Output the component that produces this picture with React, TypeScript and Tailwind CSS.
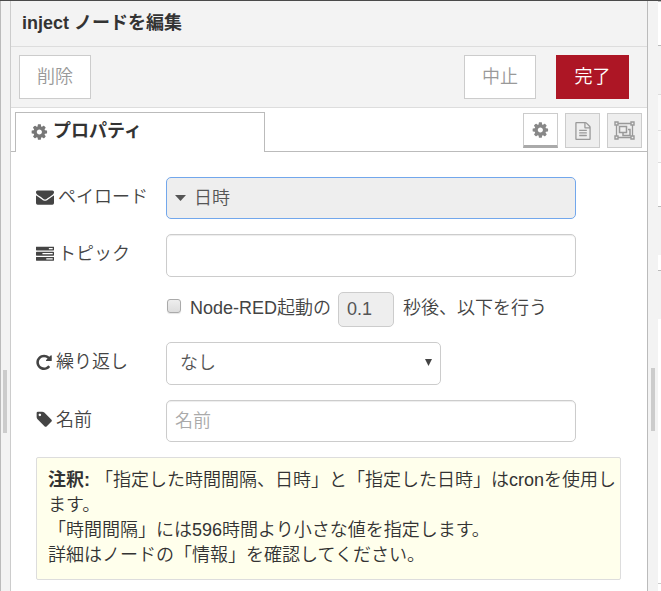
import type { ReactNode } from "react";

const paths = {
  cog: "M1152 896q0-106-75-181t-181-75-181 75-75 181 75 181 181 75 181-75 75-181zm512-109v222q0 12-8 23t-20 13l-185 28q-19 54-39 91 35 50 107 138 10 12 10 25t-9 23q-27 37-99 108t-94 71q-12 0-26-9l-138-108q-44 23-91 38-16 136-29 186-7 28-36 28h-222q-14 0-24.5-8.5t-11.5-21.5l-28-184q-49-16-90-37l-141 107q-10 9-25 9-14 0-25-11-126-114-165-168-7-10-7-23 0-12 8-23 15-21 51-66.5t54-70.5q-27-50-41-99l-183-27q-13-2-21-12.5t-8-23.5v-222q0-12 8-23t19-13l186-28q14-46 39-92-40-57-107-138-10-12-10-24 0-10 9-23 26-36 98.5-107.5t94.5-71.5q13 0 26 10l138 107q44-23 91-38 16-136 29-186 7-28 36-28h222q14 0 24.5 8.5t11.5 21.5l28 184q49 16 90 37l142-107q9-9 24-9 13 0 25 10 129 119 165 170 7 8 7 22 0 12-8 23-15 21-51 66.5t-54 70.5q26 50 41 98l183 28q13 2 21 12.5t8 23.5z",
  envelope: "M1792 710v794q0 66-47 113t-113 47h-1472q-66 0-113-47t-47-113v-794q44 49 101 87 362 246 497 345 57 42 92.5 65.5t94.5 48 110 24.5h2q51 0 110-24.5t94.5-48 92.5-65.5q170-123 498-345 57-39 100-87zm0-294q0 79-49 151t-122 123q-376 261-468 325-10 7-42.5 31t-54 38.5-52 32.5-57.5 27-50 9h-2q-23 0-50-9t-57.5-27-52-32.5-54-38.5-42.5-31q-91-64-262-182.5t-205-142.5q-62-42-117-115.5t-55-136.5q0-78 41.5-130t118.5-52h1472q65 0 112.5 47t47.5 113z",
  tag: "M576 448q0-53-37.5-90.5t-90.5-37.5-90.5 37.5-37.5 90.5 37.5 90.5 90.5 37.5 90.5-37.5 37.5-90.5zm1067 576q0 53-37 90l-491 492q-39 37-91 37-53 0-90-37l-715-716q-38-37-64.5-101t-26.5-117v-416q0-52 38-90t90-38h416q53 0 117 26.5t102 64.5l715 714q37 39 37 91z",
  repeat: "M1664 256v448q0 26-19 45t-45 19h-448q-42 0-59-40-17-39 14-69l138-138q-148-137-349-137-104 0-198.5 40.5t-163.5 109.5-109.5 163.5-40.5 198.5 40.5 198.5 109.5 163.5 163.5 109.5 198.5 40.5q119 0 225-52t179-147q7-10 23-12 15 0 25 9l137 138q9 8 9.5 20.5t-7.5 22.5q-109 132-264 204.5t-327 72.5q-156 0-298-61t-245-164-164-245-61-298 61-298 164-245 245-164 298-61q147 0 284.5 55.5t244.5 156.5l130-129q29-31 70-14 39 17 39 59z",
  tasks: "M1024 1408h640v-128h-640v128zm-384-512h1024v-128h-1024v128zm640-512h384v-128h-384v128zm512 832v256q0 26-19 45t-45 19h-1664q-26 0-45-19t-19-45v-256q0-26 19-45t45-19h1664q26 0 45 19t19 45zm0-512v256q0 26-19 45t-45 19h-1664q-26 0-45-19t-19-45v-256q0-26 19-45t45-19h1664q26 0 45 19t19 45zm0-512v256q0 26-19 45t-45 19h-1664q-26 0-45-19t-19-45v-256q0-26 19-45t45-19h1664q26 0 45 19t19 45z",
  file: "M1596 380q28 28 48 76t20 88v1152q0 40-28 68t-68 28h-1344q-40 0-68-28t-28-68v-1600q0-40 28-68t68-28h896q40 0 88 20t76 48zm-444-244v376h376q-10-29-22-41l-313-313q-12-12-41-22zm384 1528v-1024h-416q-40 0-68-28t-28-68v-416h-768v1536h1280zm-1024-864q0-14 9-23t23-9h704q14 0 23 9t9 23v64q0 14-9 23t-23 9h-704q-14 0-23-9t-9-23v-64zm736 224q14 0 23 9t9 23v64q0 14-9 23t-23 9h-704q-14 0-23-9t-9-23v-64q0-14 9-23t23-9h704zm0 256q14 0 23 9t9 23v64q0 14-9 23t-23 9h-704q-14 0-23-9t-9-23v-64q0-14 9-23t23-9h704z",
};

const boxes: Record<keyof typeof paths, string> = {
  cog: "64 0 1792 1792",
  envelope: "0 0 1792 1792",
  tag: "64 64 1792 1792",
  repeat: "96 64 1792 1792",
  tasks: "0 64 1792 1792",
  file: "0 0 1792 1792",
};

function Icon({ name }: { name: keyof typeof paths }) {
  return (
    <svg viewBox={boxes[name]} width="18" height="18" fill="currentColor" className="shrink-0" aria-hidden="true">
      <path d={paths[name]} />
    </svg>
  );
}

function ObjectGroupIcon() {
  return (
    <svg viewBox="0 0 21 19" width="21" height="19" fill="none" stroke="currentColor" className="shrink-0" aria-hidden="true">
      <path strokeWidth="1.3" d="M4 2.500h13M4 16.500h13M2.500 4v11M18.500 4v11" />
      <path strokeWidth="1.5" d="M5.500 5.500h7v6h-7zM14 8.500h2v6h-7v-2.500" />
      <path strokeWidth="1.4" d="M1 1h3v3H1zM17 1h3v3h-3zM1 15h3v3H1zM17 15h3v3h-3z" />
    </svg>
  );
}

function Row({ icon, label, htmlFor, gap, children }: { icon: keyof typeof paths; label: string; htmlFor: string; gap: string; children: ReactNode }) {
  return (
    <div className="flex items-center">
      <label htmlFor={htmlFor} className={`flex w-[130px] shrink-0 items-center whitespace-nowrap pb-[2px] ${gap}`}>
        <Icon name={icon} />
        {label}
      </label>
      {children}
    </div>
  );
}

const field =
  "min-w-0 max-w-[410px] flex-1 rounded-[5px] border border-[#ccc] bg-white px-2 text-[#555] shadow-[inset_0_1px_1px_rgba(0,0,0,0.075)] outline-none placeholder:text-[#aaa]";

const sideTab = "flex size-[35px] items-center justify-center border border-[#ccc]";

function Gutter({ className }: { className: string }) {
  return (
    <div className={`flex shrink-0 flex-col bg-[#f3f3f3] ${className}`}>
      <div className="h-[63px] w-1 bg-[#ccc]" />
    </div>
  );
}

export default function App() {
  return (
    <div className="flex min-h-screen border-t border-[#4a4a4a] bg-white font-['Liberation_Sans','Noto_Sans_CJK_JP',sans-serif] text-[18px] leading-[25px] font-[350] text-[#444]">
      <Gutter className="w-[11px] border-x border-l-[#bbb] border-r-[#ccc] pt-[369px] pl-[2px]" />

      <main className="min-w-0 flex-1">
        <header className="border-b border-[#ddd] bg-[#f3f3f3] px-[11px] py-[10px]">
          <h1 className="font-bold text-[#333]">inject ノードを編集</h1>
        </header>

        <div className="flex items-center border-b border-[#ddd] bg-[#f3f3f3] py-2 pr-[18px] pl-2">
          <button type="button" className="h-11 w-[72px] border border-[#ccc] bg-white text-[#999]">削除</button>
          <span className="flex-1" />
          <button type="button" className="mr-5 h-11 w-[72px] border border-[#ccc] bg-white text-[#999]">中止</button>
          <button type="button" className="h-11 w-[73px] bg-[#ad1625] text-white">完了</button>
        </div>

        <div className="flex h-11">
          <div className="w-1 shrink-0 border-b border-[#bbb]" />
          <button type="button" className="mt-1 flex w-[250px] items-center gap-1 border border-b-0 border-[#bbb] bg-white pb-[2px] pl-[15px] font-bold text-[#333]">
            <span className="text-[#777]"><Icon name="cog" /></span>
            プロパティ
          </button>
          <div className="flex flex-1 items-center justify-end gap-[7px] border-b border-[#bbb] pt-[2px] pr-[5px] text-[#999]">
            <button type="button" aria-label="プロパティ" className={`${sideTab} border-b-[3px] border-b-[#aaa] bg-white text-[#888]`}><Icon name="cog" /></button>
            <button type="button" aria-label="説明" className={`${sideTab} bg-[#eee]`}><Icon name="file" /></button>
            <button type="button" aria-label="外観" className={`${sideTab} bg-[#eee]`}><ObjectGroupIcon /></button>
          </div>
        </div>

        <form className="flex flex-col gap-[15px] pt-[25px] pr-[26px] pb-2 pl-[25px]">
          <Row icon="envelope" label="ペイロード" htmlFor="payload" gap="gap-1">
            <button id="payload" type="button" className="flex h-[42px] max-w-[410px] flex-1 items-center gap-[7px] rounded-[5px] border border-[#72a7ec] bg-[#eee] px-2 text-[#555]">
              <svg viewBox="0 0 12 7" width="12" height="7" fill="currentColor" aria-hidden="true"><path d="M0 0h11L5.500 6z" /></svg>
              日時
            </button>
          </Row>
          <Row icon="tasks" label="トピック" htmlFor="topic" gap="gap-1">
            <input id="topic" type="text" className={`h-[43px] ${field}`} />
          </Row>
          <div className="flex items-center pl-[131px] whitespace-nowrap">
            <input id="once" type="checkbox" className="mr-[9px] mb-2 size-[14px] appearance-none rounded-[3px] border border-[#aaa] bg-linear-to-b from-[#eee] to-[#ddd] shadow-[0_1px_1px_rgba(0,0,0,0.1)]" />
            <label htmlFor="once" className="pb-[2px]">Node-RED起動の</label>
            <input aria-label="秒数" type="text" disabled defaultValue="0.1" className="mr-[9px] ml-[7px] h-[35px] w-14 rounded-[5px] border border-[#ccc] bg-[#eee] px-2 text-[#555]" />
            <span className="pb-[2px]">秒後、以下を行う</span>
          </div>
          <Row icon="repeat" label="繰り返し" htmlFor="repeat" gap="gap-[2px]">
            <div className="relative w-[275px]">
              <select id="repeat" className="h-[43px] w-full appearance-none rounded-[5px] border border-[#ccc] bg-white px-[13px] text-[#555]">
                <option>なし</option>
              </select>
              <svg viewBox="0 0 8 8" width="8" height="8" fill="#444" className="pointer-events-none absolute top-[17px] right-2" aria-hidden="true"><path d="M0 0h7L3.500 7z" /></svg>
            </div>
          </Row>
          <Row icon="tag" label="名前" htmlFor="name" gap="gap-[2px]">
            <input id="name" type="text" placeholder="名前" className={`h-[42px] ${field}`} />
          </Row>
          <div className="rounded-[2px] border border-[#ddd] bg-[#ffffec] pt-[10px] pr-1 pb-[11px] pl-[11px] text-[#333]">
            <p><b className="font-bold">注釈:</b> 「指定した時間間隔、日時」と「指定した日時」はcronを使用します。</p>
            <p>「時間間隔」には596時間より小さな値を指定します。</p>
            <p>詳細はノードの「情報」を確認してください。</p>
          </div>
        </form>
      </main>

      <Gutter className="w-[11px] border-l border-[#bbb] pt-[367px] pl-[3px]" />
      <aside className="flex w-[3px] shrink-0 flex-col">
        <div className="h-[45px] border-y border-[#bbb]" />
        <div className="h-[49px] border-b border-[#ddd] bg-[#f3f3f3]" />
        <div className="h-9 border-b border-[#ddd] bg-[#fafafa]" />
        <div className="h-8 border-b border-[#ddd] bg-[#fafafa]" />
        <div className="h-11 border-b border-[#bbb]" />
        <div className="h-12 bg-[#f3f3f3]" />
        <div className="h-4 border-b border-[#bbb]" />
        <div className="h-12 bg-[#f3f3f3]" />
        <div className="h-[265px] border-b border-[#ccc]" />
      </aside>
    </div>
  );
}
